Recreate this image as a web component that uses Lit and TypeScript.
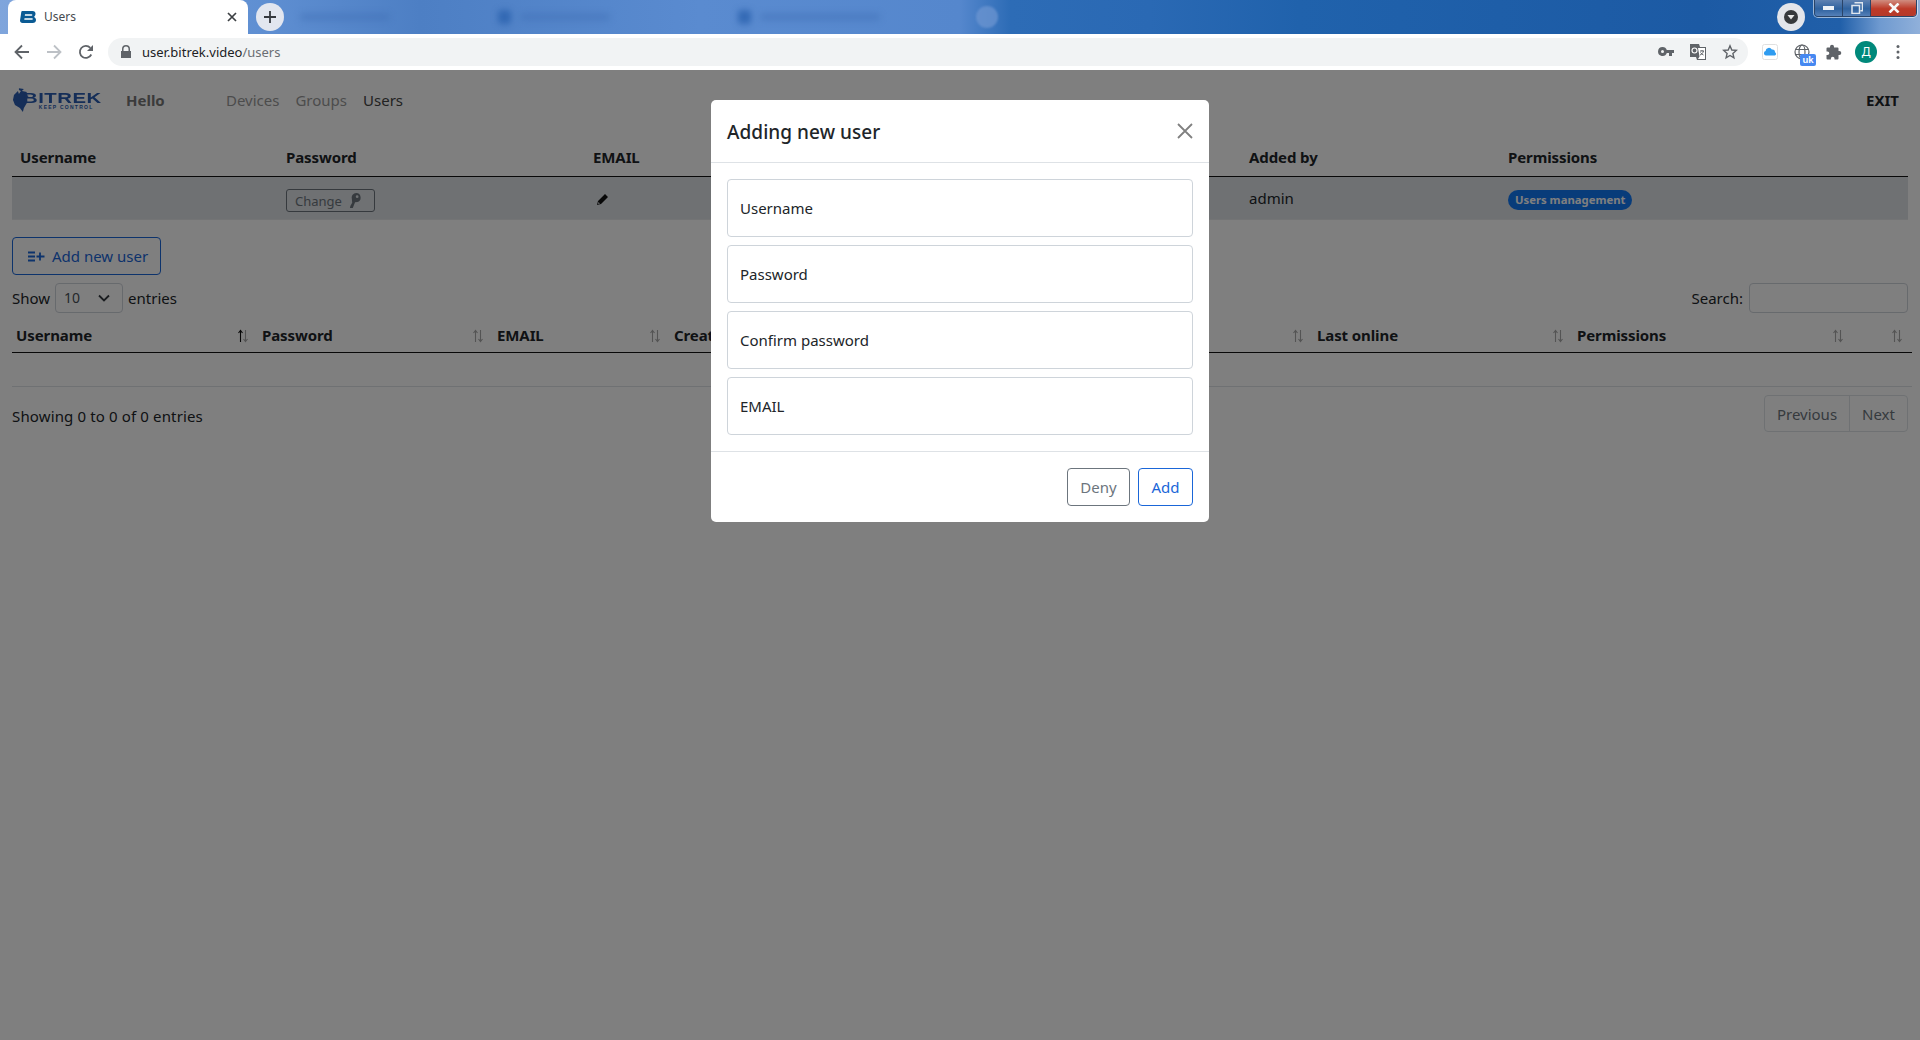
import { LitElement, html, css } from "lit";
import { customElement } from "lit/decorators.js";

const sortIcon = (active = false) => html`<svg class="sort" viewBox="0 0 12 16" width="12" height="16">
  <path d="M3.500 14V2.500M1.500 5 3.500 2.500 5.500 5" fill="none" stroke=${active ? "#111" : "#a8a8a8"} stroke-width="1.100"/>
  <path d="M8.500 2v11.500M6.500 11l2 2.500 2-2.500" fill="none" stroke="#a8a8a8" stroke-width="1.100"/>
</svg>`;

@customElement("browser-chrome")
class BrowserChrome extends LitElement {
  static styles = css`
    :host { display: block; height: 70px; font-family: "Noto Sans", "Open Sans", sans-serif; }
    .strip {
      position: relative; height: 34px; overflow: hidden;
      background: linear-gradient(90deg, #7fa5dc 0, #5f8fd2 260px, #4d7fc4 420px, #5a8bd0 700px, #5587cd 960px, #2d6cb6 1010px, #2a69b4 1150px, #2062ac 1300px, #1c5aa4 1700px, #205fa9 1840px, #6f9ad0 1880px, #90b0da 1920px);
    }
    .smudges { position: absolute; inset: 0; filter: blur(3px); }
    .smudge { position: absolute; top: 13px; height: 8px; background: #3f6fb4; opacity: .4; border-radius: 3px; }
    .smudge.icon { top: 10px; width: 13px; height: 14px; opacity: .8; background: #2a62ae; }
    .tab {
      position: absolute; left: 8px; top: 0; width: 240px; height: 34px; box-sizing: border-box;
      background: #fff; border-radius: 8px 8px 0 0; display: flex; align-items: center; padding: 0 10px 0 12px;
      font-size: 12px; color: #45494e;
    }
    .tab span { margin-left: 8px; flex: 1; }
    .newtab {
      position: absolute; left: 256px; top: 3px; width: 28px; height: 28px; border-radius: 50%;
      background: #e2e6ef; display: flex; align-items: center; justify-content: center;
    }
    .ghost {
      position: absolute; left: 976px; top: 6px; width: 22px; height: 22px; border-radius: 50%;
      background: #6f97d2; opacity: .7; filter: blur(1px);
    }
    .profile {
      position: absolute; left: 1777px; top: 3px; width: 28px; height: 28px; border-radius: 50%;
      background: #e3e5ea; display: flex; align-items: center; justify-content: center;
    }
    .winbtns {
      position: absolute; left: 1814px; top: -1px; width: 103px; height: 18px; box-sizing: border-box; display: flex;
      border: 1px solid #2a4468; border-radius: 0 0 4px 4px; overflow: hidden; box-shadow: 0 0 0 1px rgba(255,255,255,.55);
    }
    .wb { display: flex; align-items: center; justify-content: center; width: 27px; background: linear-gradient(#5f82b2, #2f629f 55%, #5580b8); border-right: 1px solid #2a4468; }
    .wb.close { flex: 1; border: 0; background: linear-gradient(#d08d80, #bd3a28 55%, #b5392a); }
    .toolbar {
      height: 36px; background: #fff; display: flex; align-items: center; padding: 0 12px 0 12px; box-sizing: border-box;
    }
    .tb { width: 20px; height: 20px; display: flex; align-items: center; justify-content: center; flex: none; }
    .nav { display: flex; gap: 12px; margin-right: 12px; }
    .omni {
      width: 1640px; height: 28px; flex: none; border-radius: 14px; background: #f1f3f4; display: flex; align-items: center;
      padding: 0 8px 0 12px; box-sizing: border-box; font-size: 13px; color: #202124;
    }
    .url { margin-left: 10px; flex: 1; }
    .url i { font-style: normal; color: #6a6e73; }
    .omni .tb { margin-left: 12px; }
    .ext { display: flex; align-items: center; gap: 12px; margin-left: 12px; }
    .ext .tb { position: relative; }
    .badge {
      position: absolute; right: -4px; bottom: -4px; width: 16px; height: 12px; border-radius: 2px; background: #4688f1; color: #fff;
      font: bold 9.500px/12px "Liberation Sans", sans-serif; text-align: center;
    }
    .avatar {
      width: 22px; height: 22px; margin: 0 -1px; border-radius: 50%; background: #00897b; color: #fff; font: 12px/22px "Noto Sans", sans-serif; text-align: center;
    }
  `;
  render() {
    return html`
      <div class="strip">
        <div class="smudges">
          <div class="smudge" style="left:300px;width:90px"></div>
          <div class="smudge icon" style="left:498px"></div>
          <div class="smudge" style="left:520px;width:90px"></div>
          <div class="smudge icon" style="left:738px"></div>
          <div class="smudge" style="left:760px;width:120px"></div>
        </div>
        <div class="ghost"></div>
        <div class="tab">
          <svg width="16" height="12" viewBox="0 0 16 12"><path fill="#0b5b94" fill-rule="evenodd" d="M2 0h10.500C14.500 0 15.500 1.200 15.500 2.800c0 1.400-.6 2.500-1.500 3.200 1.200.6 2 1.700 2 3 0 1.800-1.300 3-3.300 3H2.500C1 12 0 11 0 9.500L1 3C1.200 1 1.500 0 2 0zM5 3.200 4.800 4.700h6.700c.5 0 .9-.3.9-.8 0-.4-.3-.7-.9-.7zM4.500 7.300 4.300 8.800h7.700c.5 0 .9-.3.9-.8 0-.4-.3-.7-.9-.7z"/></svg>
          <span>Users</span>
          <svg width="12" height="12" viewBox="0 0 12 12"><path d="M2 2l8 8M10 2l-8 8" stroke="#3c4043" stroke-width="1.700"/></svg>
        </div>
        <div class="newtab"><svg width="14" height="14" viewBox="0 0 14 14"><path d="M7 1v12M1 7h12" stroke="#35393e" stroke-width="1.800"/></svg></div>
        <div class="profile"><svg width="16" height="16" viewBox="0 0 16 16"><circle cx="8" cy="8" r="7" fill="#37393c"/><path d="M4.500 6h7L8 10.500z" fill="#e8e8e8"/></svg></div>
        <div class="winbtns">
          <div class="wb"><svg width="12" height="6" viewBox="0 0 12 6"><rect y="1" width="11" height="4" fill="#eef2f7"/></svg></div>
          <div class="wb"><svg width="12" height="12" viewBox="0 0 12 12"><path d="M3.500 .8h8v8h-2M1 3.500h7.500v8H1z" fill="none" stroke="#dfe6ee" stroke-width="1.500"/></svg></div>
          <div class="wb close"><svg width="12" height="10" viewBox="0 0 12 10"><path d="M1.500.5l9 9M10.500.5l-9 9" stroke="#f6f6f6" stroke-width="2.600"/></svg></div>
        </div>
      </div>
      <div class="toolbar">
        <div class="nav">
          <div class="tb"><svg width="16" height="16" viewBox="0 0 16 16"><path d="M15 8H2M8 1.500 1.500 8 8 14.500" fill="none" stroke="#5f6368" stroke-width="1.800"/></svg></div>
          <div class="tb"><svg width="16" height="16" viewBox="0 0 16 16"><path d="M1 8h13M8 1.500 14.500 8 8 14.500" fill="none" stroke="#bdc1c6" stroke-width="1.800"/></svg></div>
          <div class="tb"><svg width="16" height="16" viewBox="0 0 16 16"><path d="M13.300 10.500A6 6 0 1 1 12.300 3.800" fill="none" stroke="#5f6368" stroke-width="1.800"/><path d="M15 1v6H9z" fill="#5f6368"/></svg></div>
        </div>
        <div class="omni">
          <svg width="12" height="14" viewBox="0 0 12 14"><path fill="#5f6368" d="M2 6V4a4 4 0 0 1 8 0v2h1v7H1V6zm1.500 0h5V4a2.500 2.500 0 0 0-5 0z"/></svg>
          <div class="url">user.bitrek.video<i>/users</i></div>
          <div class="tb"><svg width="16" height="10" viewBox="0 0 16 10"><path fill="#5f6368" d="M4.500 0a4.500 4.500 0 0 1 4.300 3H16v3h-2v3h-3V6H8.800A4.500 4.500 0 1 1 4.500 0zm0 3a1.500 1.500 0 1 0 0 3 1.500 1.500 0 0 0 0-3z"/></svg></div>
          <div class="tb"><svg width="16" height="16" viewBox="0 0 16 16"><path fill="#5f6368" d="M0 0h9l1 3h6v13H7l-1-3H0z"/><path fill="#fff" d="M8 4h7v11H8l1.500-2.500z"/><circle cx="4.500" cy="6.500" r="2.500" fill="none" stroke="#fff" stroke-width="1.100"/><path d="M10 7h4M12 6v1M13.500 7c-.5 2-2 3.500-3.500 4M10.500 8.500c.7 1 1.800 2 3 2.500" fill="none" stroke="#5f6368"/></svg></div>
          <div class="tb"><svg width="16" height="16" viewBox="0 0 16 16"><path d="M8 1.800 9.800 6l4.500.4-3.400 3 1 4.400L8 11.500l-3.900 2.300 1-4.400-3.400-3L6.200 6z" fill="none" stroke="#5f6368" stroke-width="1.400"/></svg></div>
        </div>
        <div class="ext">
          <div class="tb"><svg width="16" height="16" viewBox="0 0 16 16"><rect x=".5" y=".5" width="15" height="15" rx="2" fill="#fff" stroke="#e0e0e0"/><path d="M4 11.500a2.300 2.300 0 0 1-.4-4.500A3.300 3.300 0 0 1 9.800 5.600 2.800 2.800 0 0 1 13 8.300a1.700 1.700 0 0 1-.2 3.200z" fill="#2f9cf0"/></svg></div>
          <div class="tb"><svg width="16" height="16" viewBox="0 0 16 16"><g fill="none" stroke="#5f6368" stroke-width="1.200"><circle cx="8" cy="8" r="7"/><ellipse cx="8" cy="8" rx="3" ry="7"/><path d="M1.500 5.500h13M1.500 10.500h13"/></g></svg><span class="badge">uk</span></div>
          <div class="tb"><svg width="16" height="16" viewBox="0 0 16 16"><path fill="#5f6368" d="M6 .8a2 2 0 0 1 2 2V3.500h3.500a1 1 0 0 1 1 1V7h.8a2 2 0 0 1 0 4h-.8v3.500a1 1 0 0 1-1 1H8.500V14.500a1.800 1.800 0 0 0-3.600 0v1H1.500a1 1 0 0 1-1-1V11h1a1.800 1.800 0 0 0 0-3.600h-1V4.500a1 1 0 0 1 1-1H4V2.800a2 2 0 0 1 2-2z"/></svg></div>
          <div class="avatar">Д</div>
          <div class="tb"><svg width="4" height="16" viewBox="0 0 4 16"><circle cx="2" cy="2.500" r="1.500" fill="#5f6368"/><circle cx="2" cy="8" r="1.500" fill="#5f6368"/><circle cx="2" cy="13.500" r="1.500" fill="#5f6368"/></svg></div>
        </div>
      </div>
    `;
  }
}

@customElement("app-root")
class AppRoot extends LitElement {
  static styles = css`
    :host { display: block; width: 1920px; height: 1040px; overflow: hidden; font-family: "Noto Sans", "Open Sans", sans-serif; font-size: 15px; line-height: 24px; color: #212529; }
    .page { position: relative; height: 970px; background: #fff; overflow: hidden; }
    .topnav { height: 60px; display: flex; align-items: center; padding: 0 21px 0 12px; }
    .logo { display: flex; align-items: center; width: 88px; height: 28px; color: #2a5cb0; flex: none; }
    .logo-words { margin-left: -7px; margin-top: 1px; width: 78px; display: flex; flex-direction: column; }
    .logo-main { font: bold 14px/12px "Liberation Sans", sans-serif; letter-spacing: .35px; transform: scaleX(1.45); transform-origin: left center; white-space: nowrap; }
    .logo-sub { font: bold 5px/6px "Liberation Sans", sans-serif; letter-spacing: 1.250px; margin-left: 16px; white-space: nowrap; }
    .hello { font-weight: 700; margin-left: 26px; color: #777; width: 100px; }
    .link { color: #999; margin-right: 16px; }
    .link.on { color: #444; }
    .exit { margin-left: auto; font-weight: 700; }

    .t1 { margin: 0 12px; }
    .t1-row { display: grid; grid-template-columns: 274px 307px 656px 259px 400px; }
    .t1-head { height: 47px; box-sizing: border-box; border-bottom: 1px solid #111; align-items: end; font-weight: 700; padding-bottom: 7px; letter-spacing: -.1px; }
    .t1-head > div, .t1-body > div { padding-left: 8px; }
    .t1-head > div:nth-child(n+2), .t1-body > div:nth-child(n+2) { padding-left: 0; }
    .t1-body { height: 43px; box-sizing: border-box; background: #dee2e6; border-bottom: 1px solid #e6e8ea; align-items: center; }
    .change {
      display: inline-flex; align-items: center; gap: 6px; height: 23px; width: 89px; padding-left: 8px; box-sizing: border-box; margin-top: 5px;
      border: 1px solid #6c757d; border-radius: 3px; color: #6c757d; font-size: 13px;
    }
    .pencil { display: block; margin: 2px 0 0 4px; }
    .admin { margin-top: 0; }
    .perm {
      display: inline-block; background: #1078f5; color: #fff; font-size: 11.300px; font-weight: 700; line-height: 20px; height: 20px; padding: 0 7px;
      border-radius: 10px; margin-top: 4px; vertical-align: top;
    }
    .add {
      display: flex; align-items: center; gap: 7px; margin: 17px 0 0 12px; width: 149px; height: 38px; box-sizing: border-box; padding-left: 15px;
      border: 1px solid #1a66d8; border-radius: 4px; color: #1a66d8;
    }
    .controls { display: flex; align-items: center; margin: 8px 12px 0; height: 30px; }
    .select {
      display: flex; align-items: center; justify-content: space-between; box-sizing: border-box; width: 68px; height: 30px; margin: 0 5px 0 5px; padding: 0 12px 0 8px;
      border: 1px solid #ced4da; border-radius: 4px; color: #495057; font-size: 14px;
    }
    .search-label { margin-left: auto; margin-right: 6px; }
    .search { width: 159px; height: 30px; box-sizing: border-box; border: 1px solid #ced4da; border-radius: 4px; background: #fff; padding: 0; }
    .t2 { margin-left: 12px; width: 1900px; }
    .t2-head { display: grid; grid-template-columns: 246px 235px 177px 330px 313px 260px 280px 59px; height: 40px; box-sizing: border-box; border-bottom: 1px solid #111; font-weight: 700; letter-spacing: -.1px; }
    .th { display: flex; align-items: flex-end; justify-content: space-between; padding: 0 9px 2px 4px; height: 37px; box-sizing: border-box; }
    .th span { line-height: 24px; margin-bottom: 1px; }
    .sort { margin-bottom: 4px; }
    .t2-empty { height: 34px; box-sizing: border-box; border-bottom: 1px solid #dee2e6; }
    .bottom { display: flex; justify-content: space-between; margin: 8px 12px 0; }
    .info { padding-top: 9px; letter-spacing: .14px; }
    .pager { display: flex; height: 37px; box-sizing: border-box; border: 1px solid #dee2e6; border-radius: 4px; color: #6c757d; }
    .pager div { display: flex; align-items: center; justify-content: center; }
    .prev { width: 84px; border-right: 1px solid #dee2e6; }
    .next { width: 57px; }

    .overlay { position: absolute; inset: 0; background: rgba(0,0,0,.5); display: flex; justify-content: center; padding-top: 30px; box-sizing: border-box; }
    .modal { width: 498px; height: 422px; background: #fff; border-radius: 5px; display: flex; flex-direction: column; }
    .m-head { height: 63px; box-sizing: border-box; display: flex; align-items: center; justify-content: space-between; padding: 0 16px; border-bottom: 1px solid #dee2e6; }
    .m-title { font-size: 19px; font-weight: 500; color: #212529; margin-top: 1px; letter-spacing: .05px; }
    .m-body { padding: 16px; display: flex; flex-direction: column; gap: 8px; border-bottom: 1px solid #dee2e6; }
    .m-body input {
      display: block; width: 100%; height: 58px; box-sizing: border-box; padding: 0 12px; border: 1px solid #ced4da; border-radius: 4px;
      font: inherit; background: #fff;
    }
    .m-body input::placeholder { color: #212529; opacity: 1; }
    .m-foot { display: flex; justify-content: flex-end; gap: 8px; padding: 16px; }
    .btn { height: 38px; box-sizing: border-box; display: flex; align-items: center; justify-content: center; border-radius: 4px; border: 1px solid; }
    .deny { width: 63px; color: #6c757d; border-color: #6c757d; }
    .ok { width: 55px; color: #1a66d8; border-color: #1a66d8; }
  `;

  render() {
    const heads = ["Username", "Password", "EMAIL", "Created", "Added by", "Last online", "Permissions", ""];
    return html`
      <browser-chrome></browser-chrome>
      <div class="page">
        <div class="topnav">
          <div class="logo">
            <svg width="18" height="26" viewBox="0 0 18 26"><path fill="#2a5cb0" d="M7 1l5 1-2 2 5 1-1 3 3 1-3 2 1 5-3 5-1 4-3-4-5-3-2-5 1-5 4-4 1 3 2-3-2-1z"/></svg>
            <div class="logo-words"><span class="logo-main">BITREK</span><span class="logo-sub">KEEP CONTROL</span></div>
          </div>
          <div class="hello">Hello</div>
          <div class="link">Devices</div>
          <div class="link">Groups</div>
          <div class="link on">Users</div>
          <div class="exit">EXIT</div>
        </div>

        <div class="t1">
          <div class="t1-row t1-head"><div>Username</div><div>Password</div><div>EMAIL</div><div>Added by</div><div>Permissions</div></div>
          <div class="t1-row t1-body">
            <div></div>
            <div><span class="change">Change
              <svg width="13" height="15" viewBox="0 0 11 13"><path fill="#6c757d" d="M7 0a4 4 0 0 1 1 7.800L6 8 4 13H1.500l.5-2L3.500 8.500 3.200 5A4 4 0 0 1 7 0zm.8 2a1.200 1.200 0 1 0 0 2.400 1.200 1.200 0 0 0 0-2.400z"/></svg>
            </span></div>
            <div><svg class="pencil" width="11" height="11" viewBox="0 0 11 11"><path fill="#111" d="M8 0l3 3-7 7-4 1 1-4zM1.500 8 1 10l2-.5z"/></svg></div>
            <div class="admin">admin</div>
            <div><span class="perm">Users management</span></div>
          </div>
        </div>

        <div class="add">
          <svg width="17" height="11" viewBox="0 0 17 11"><path d="M0 1.500h7M0 5.500h7M0 9.500h7M12 1.500v8M8.500 5.500h8" stroke="#1a66d8" stroke-width="1.800" fill="none"/></svg>
          Add new user
        </div>

        <div class="controls">
          <span>Show</span>
          <div class="select">10
            <svg width="12" height="8" viewBox="0 0 12 8"><path d="M1 1.500 6 6.500l5-5" fill="none" stroke="#343a40" stroke-width="1.800"/></svg>
          </div>
          <span>entries</span>
          <span class="search-label">Search:</span>
          <input class="search" aria-label="Search" />
        </div>

        <div class="t2">
          <div class="t2-head">
            ${heads.map((h, i) => html`<div class="th"><span>${h}</span>${sortIcon(i === 0)}</div>`)}
          </div>
          <div class="t2-empty"></div>
        </div>

        <div class="bottom">
          <div class="info">Showing 0 to 0 of 0 entries</div>
          <div class="pager"><div class="prev">Previous</div><div class="next">Next</div></div>
        </div>

        <div class="overlay">
          <div class="modal">
            <div class="m-head">
              <div class="m-title">Adding new user</div>
              <svg width="16" height="16" viewBox="0 0 16 16"><path d="M1 1l14 14M15 1 1 15" stroke="#808080" stroke-width="1.800"/></svg>
            </div>
            <div class="m-body">
              <input placeholder="Username" />
              <input placeholder="Password" />
              <input placeholder="Confirm password" />
              <input placeholder="EMAIL" />
            </div>
            <div class="m-foot">
              <div class="btn deny">Deny</div>
              <div class="btn ok">Add</div>
            </div>
          </div>
        </div>
      </div>
    `;
  }
}
